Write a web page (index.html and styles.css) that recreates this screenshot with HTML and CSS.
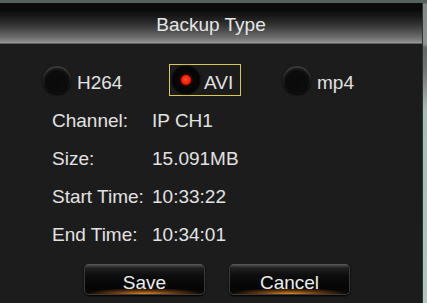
FILE: index.html
```html
<!DOCTYPE html>
<html>
<head>
<meta charset="utf-8">
<link rel="stylesheet" href="styles.css">
</head>
<body>
<div class="dialog">
  <div class="title">Backup Type</div>
  <div class="types">
    <div class="opt"><span class="radio"></span><span class="opt-text">H264</span></div>
    <div class="opt opt-selected"><span class="radio radio-on"><span class="dot"></span></span><span class="opt-text">AVI</span></div>
    <div class="opt"><span class="radio"></span><span class="opt-text">mp4</span></div>
  </div>
  <div class="info">
    <div class="row"><span class="label">Channel:</span><span class="value">IP CH1</span></div>
    <div class="row"><span class="label">Size:</span><span class="value">15.091MB</span></div>
    <div class="row"><span class="label">Start Time:</span><span class="value">10:33:22</span></div>
    <div class="row"><span class="label">End Time:</span><span class="value">10:34:01</span></div>
  </div>
  <div class="buttons">
    <div class="btn">Save</div>
    <div class="btn">Cancel</div>
  </div>
</div>
</body>
</html>
```
FILE: styles.css
```css
html, body {
  margin: 0;
  padding: 0;
}
body {
  width: 427px;
  height: 303px;
  overflow: hidden;
  background: linear-gradient(to bottom, #56605d 0px, #56605d 3px, #7d8985 4px, #8a9691 44px, #5e6864 48px, #6c7772 70px, #a9bcb4 110px, #b3c6be 303px);
  font-family: "Liberation Sans", Arial, sans-serif;
  color: #e2e2e2;
}
.dialog {
  margin-top: 3px;
  width: 422px;
  height: 300px;
  background: #1c1c1c;
  border-right: 1px solid #2e3331;
}
.title {
  height: 41px;
  box-sizing: border-box;
  padding-top: 2px;
  line-height: 39px;
  text-align: center;
  font-size: 19px;
  color: #e6e6e6;
  background: linear-gradient(to bottom, #0d0d0d 0px, #090909 6px, #151515 12px, #262626 18px, #3c3c3c 24px, #585858 30px, #707070 35px, #848484 38px, #9a9a9a 40px, #2a2a2a 41px);
}
.types {
  display: grid;
  grid-template-columns: 126px 114px auto;
  margin-top: 20px;
  padding-left: 43px;
  height: 32px;
  font-size: 19px;
}
.opt {
  display: flex;
  align-items: center;
  height: 32px;
}
.opt-selected {
  width: 72px;
  box-sizing: border-box;
  border: 1px solid #d8c84e;
  padding-left: 2px;
}
.radio {
  width: 28px;
  height: 28px;
  border-radius: 50%;
  flex: none;
  background: radial-gradient(circle at 50% 58%, #0a0a0a 0%, #0c0c0c 50%, #1a1a1a 70%, #3a3a3a 88%, #222222 100%);
  box-shadow: 0 1px 2px #000, inset 0 2px 2px rgba(120, 120, 120, 0.35);
  display: flex;
  align-items: center;
  justify-content: center;
}
.radio-on {
  background: radial-gradient(circle at 50% 50%, #0a0a0a 0%, #050505 70%, #141414 92%, #0a0a0a 100%);
  box-shadow: 0 0 2px #000;
}
.dot {
  width: 10px;
  height: 10px;
  border-radius: 50%;
  background: radial-gradient(circle at 50% 45%, #ff5030 0%, #ff1a00 55%, #c00800 100%);
  box-shadow: 0 0 3px #b00000;
}
.opt-text {
  margin-left: 6px;
  padding-top: 6px;
  line-height: 22px;
}
.opt-selected .opt-text {
  margin-left: 4px;
}
.info {
  margin-top: 6px;
  padding-left: 52px;
  font-size: 19px;
}
.row {
  display: flex;
  height: 38px;
  line-height: 38px;
}
.label {
  width: 100px;
}
.buttons {
  display: flex;
  gap: 24px;
  margin-top: 10px;
  padding-left: 84px;
}
.btn {
  width: 121px;
  height: 31px;
  box-sizing: border-box;
  padding-top: 2px;
  line-height: 31px;
  text-align: center;
  font-size: 19px;
  color: #ececec;
  border: 1px solid #3a3a3a;
  border-top-color: #555;
  border-radius: 5px;
  background:
    radial-gradient(ellipse 50% 6px at 50% 100%, rgba(235, 145, 40, 0.95) 0%, rgba(200, 110, 30, 0.5) 50%, rgba(0, 0, 0, 0) 100%),
    linear-gradient(to bottom, #4a4a4a 0px, #202020 3px, #0e0e0e 10px, #050505 22px, #080808 31px);
  box-shadow: 0 1px 2px #000;
  overflow: hidden;
}
```
